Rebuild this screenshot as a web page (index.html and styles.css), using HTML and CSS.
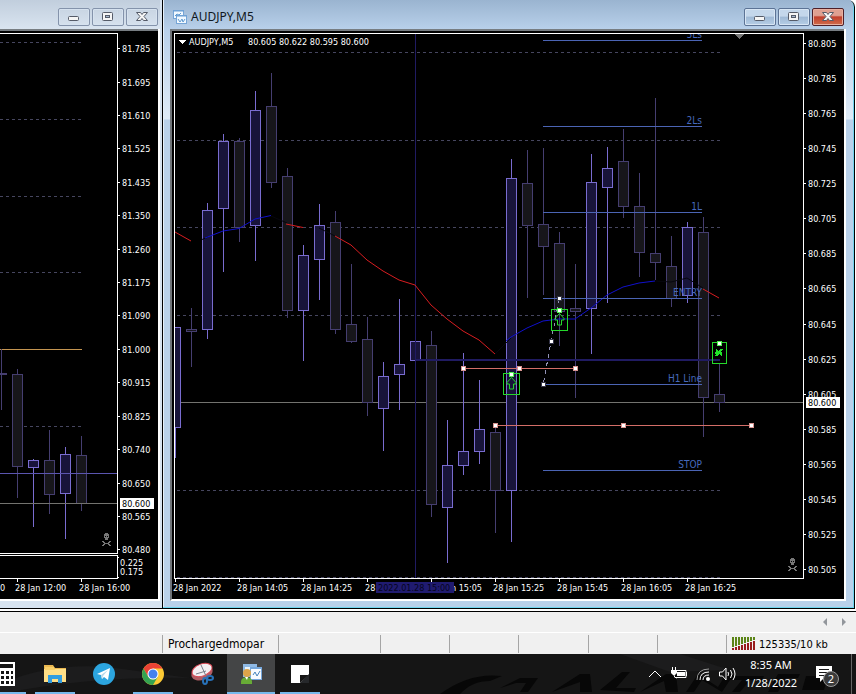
FILE: index.html
```html
<!DOCTYPE html>
<html lang="en">
<head>
<meta charset="utf-8">
<title>AUDJPY,M5</title>
<link rel="stylesheet" href="styles.css">
</head>
<body>
<main class="workspace">
  <section class="window window-idle" aria-label="Background chart">
    <header class="titlebar">
      <div class="controls">
        <button class="ctl" aria-label="Minimize"><svg viewBox="0 0 32 18"><rect class="glyph" x="10.500" y="8.500" width="10" height="4" rx="1"/></svg></button>
        <button class="ctl" aria-label="Restore"><svg viewBox="0 0 32 18"><rect class="glyph" x="10.500" y="4.500" width="10" height="8" rx="1"/><rect class="hole" x="13.500" y="7.500" width="4" height="2"/></svg></button>
        <button class="ctl" aria-label="Close"><svg viewBox="0 0 32 18"><path class="glyph" d="M10.500 4.500h4l1.500 2 1.500-2h4l-3.500 4 3.500 4h-4l-1.500-2-1.500 2h-4l3.500-4z"/></svg></button>
      </div>
    </header>
    <div class="pane">
      <svg class="chart" viewBox="0 31 158 568" role="img" aria-label="Price chart">
        <path class="grid" d="M0 42.500H82M0 119.500H82M0 196.500H82M0 272.500H82M0 426.500H82"/>
        <path class="orange" d="M0 349.500H82"/>
        <path class="bear" d="M1.500 349V410M17.500 369V498M49.500 430V514M81.500 436V511"/>
        <path class="bull" d="M33.500 459V527M65.500 447V539"/>
        <path class="bear" d="M-4.500 373.500h11v1h-11zM12.500 374.500h10v92h-10zM44.500 460.500h10v34h-10zM76.500 455.500h10v48h-10z"/>
        <path class="bull" d="M28.500 460.500h10v7h-10zM60.500 454.500h10v39h-10z"/>
        <path class="violet" d="M0 473.500H117"/>
        <path class="price" d="M0 503.500H117"/>
        <path class="frame" d="M0 33.500H117.500V553.500H0M0 555.500H117.500V578.500H0"/>
        <path class="frame" d="M118 48.500h2M118 82.500h2M118 115.500h2M118 148.500h2M118 182.500h2M118 215.500h2M118 249.500h2M118 282.500h2M118 315.500h2M118 349.500h2M118 382.500h2M118 416.500h2M118 449.500h2M118 483.500h2M118 516.500h2M118 549.500h2M118 557.500h1M118 577.500h1M17.500 578v4M81.500 578v4"/>
        <g class="skull"><path d="M105 533h3v1h1v4h-1v2h-3v-2h-1v-4h1zM102 541h2v1h1v1h3v-1h1v-1h2v1h-1v1h-1v1h1v1h1v1h-2v-1h-1v-1h-3v1h-1v1h-2v-1h1v-1h1v-1h-1v-1h-1z"/><path class="eyes" d="M105 536h1v1h-1zM107 536h1v1h-1z"/></g>
        <g class="label">
          <text x="122" y="52">81.785</text><text x="122" y="86">81.695</text><text x="122" y="119">81.610</text><text x="122" y="152">81.525</text><text x="122" y="186">81.435</text><text x="122" y="219">81.350</text><text x="122" y="253">81.260</text><text x="122" y="286">81.175</text><text x="122" y="319">81.090</text><text x="122" y="353">81.000</text><text x="122" y="386">80.915</text><text x="122" y="420">80.825</text><text x="122" y="453">80.740</text><text x="122" y="487">80.650</text><text x="122" y="520">80.565</text><text x="122" y="553">80.480</text>
          <text x="120" y="566">0.225</text><text x="120" y="575">0.175</text>
          <text x="0" y="591">0</text><text x="15" y="591">28 Jan 12:00</text><text x="79" y="591">28 Jan 16:00</text>
        </g>
        <rect class="tag" x="120" y="498" width="34" height="11"/><text class="tagtext" x="122" y="507">80.600</text>
      </svg>
    </div>
  </section>

  <section class="window window-active" aria-label="AUDJPY,M5 chart">
    <header class="titlebar">
      <svg class="doc" viewBox="0 0 14 14"><rect class="sheet" x=".5" y=".5" width="10" height="8"/><path class="sheetbar" d="M0 1h11"/><path class="trace" d="M2 6l2-2 2 1 2-2"/><rect class="sheet" x="3.500" y="5.500" width="10" height="8"/><path class="sheetbar" d="M3 6h11"/><path class="trace" d="M5 9l2 3 2-3 1 3 2-3"/></svg>
      <h1 class="caption">AUDJPY,M5</h1>
      <div class="controls">
        <button class="ctl" aria-label="Minimize"><svg viewBox="0 0 32 18"><rect class="glyph" x="10.500" y="8.500" width="10" height="4" rx="1"/></svg></button>
        <button class="ctl" aria-label="Restore"><svg viewBox="0 0 32 18"><rect class="glyph" x="10.500" y="4.500" width="10" height="8" rx="1"/><rect class="hole" x="13.500" y="7.500" width="4" height="2"/></svg></button>
        <button class="ctl ctl-close" aria-label="Close"><svg viewBox="0 0 32 18"><path class="glyph" d="M10.500 4.500h4l1.500 2 1.500-2h4l-3.500 4 3.500 4h-4l-1.500-2-1.500 2h-4l3.500-4z"/></svg></button>
      </div>
    </header>
    <div class="pane">
      <svg class="chart" viewBox="172 31 672 568" role="img" aria-label="AUDJPY five minute candles">
        <defs><clipPath id="plot"><rect x="175" y="34" width="628" height="544"/></clipPath></defs>
        <g clip-path="url(#plot)">
          <path class="grid" d="M177 52.500H720M177 140.500H720M177 227.500H720M177 315.500H720M177 490.500H720M177 577.500H720"/>
          <path class="price" d="M175 402.500H803"/>
          <path class="bear" d="M191.500 308V367M239.500 138V242M271.500 73V188M287.500 168V318M335.500 211V334M351.500 264V343M367.500 317V416M431.500 331V517M495.500 426V533M527.500 150V298M543.500 148V295M559.500 232V346M575.500 264V398M623.500 129V218M639.500 173V277M655.500 98V280M671.500 236V307M703.500 217V437M719.500 364V412"/>
          <path class="bull" d="M175.500 427V458M207.500 203V339M223.500 134V272M255.500 91V261M303.500 245V361M319.500 204V300M383.500 362V451M399.500 299V410M447.500 420V563M463.500 353V475M479.500 380V464M511.500 159V542M591.500 154V354M607.500 147V303M687.500 222V303"/>
          <path class="bear" d="M186.500 329.500h10v2h-10zM234.500 141.500h10v86h-10zM266.500 106.500h10v76h-10zM282.500 176.500h10v134h-10zM330.500 222.500h10v107h-10zM346.500 324.500h10v17h-10zM362.500 339.500h10v63h-10zM426.500 345.500h10v159h-10zM490.500 432.500h10v58h-10zM522.500 183.500h10v42h-10zM538.500 224.500h10v22h-10zM554.500 243.500h10v68h-10zM570.500 308.500h10v3h-10zM618.500 161.500h10v45h-10zM634.500 206.500h10v46h-10zM650.500 253.500h10v9h-10zM666.500 266.500h10v32h-10zM698.500 232.500h10v165h-10zM714.500 394.500h10v8h-10z"/>
          <path class="bull" d="M170.500 327.500h10v100h-10zM202.500 210.500h10v119h-10zM218.500 141.500h10v67h-10zM250.500 110.500h10v115h-10zM298.500 255.500h10v55h-10zM314.500 225.500h10v34h-10zM378.500 376.500h10v32h-10zM394.500 364.500h10v10h-10zM410.500 341.500h10v19h-10zM442.500 465.500h10v42h-10zM458.500 451.500h10v14h-10zM474.500 429.500h10v22h-10zM506.500 178.500h10v312h-10zM586.500 182.500h10v126h-10zM602.500 168.500h10v19h-10zM682.500 227.500h10v68h-10z"/>
          <path class="navy" d="M415.500 34V578"/>
          <path class="navy thick" d="M416 360H720"/>
          <path class="ma dark" d="M202 239.500L208 237M271 216L287 223M319 228L335 236M495 354L511 338M655 281L671 282L687 278L703 288"/>
          <path class="ma down" d="M175 232L191 241M286 224L303 227.500M335 236L351 245L367 260L383 271L399 280L415 285L431 305L447 319L463 331L479 340L495 354M703 289L719 298"/>
          <path class="ma up" d="M205 238L223 231L239 228.500L255 219L271 215.500M506 341L511 337L527 328L543 321L559 319L575 319L591 308L607 295L623 287L639 283L655 281"/>
          <path class="level" d="M543 40.500H702M543 126.500H702M543 212.500H702M543 298.500H702M543 384.500H702M543 470.500H702"/>
          <g class="leveltext"><text x="702" y="38">3Ls</text><text x="702" y="124">2Ls</text><text x="702" y="210">1L</text><text x="702" y="296">ENTRY</text><text x="702" y="382">H1 Line</text><text x="702" y="468">STOP</text></g>
          <path class="trade" d="M463 368.500H576M495 425.500H752"/>
          <path class="link" d="M559 299L543 385"/>
          <g class="dot"><rect x="557.500" y="296.500" width="4" height="4"/><rect x="549.500" y="339.500" width="4" height="4"/><rect x="541.500" y="382.500" width="4" height="4"/></g>
          <g class="handle"><rect x="461.500" y="366.500" width="4" height="4"/><rect x="517.500" y="366.500" width="4" height="4"/><rect x="573.500" y="366.500" width="4" height="4"/><rect x="493.500" y="423.500" width="4" height="4"/><rect x="621.500" y="423.500" width="4" height="4"/><rect x="749.500" y="423.500" width="4" height="4"/></g>
          <path class="marker" d="M503.500 373.500h16v21h-16zM551.500 309.500h16v21h-16zM712.500 342.500h14v21h-14z"/>
          <path class="arrow" d="M511.500 377.500l4.500 5v1.500h-2.500v5h-4v-5H507v-1.500zM559.500 313.500l4.500 5v1.500h-2.500v5h-4v-5H555v-1.500z"/>
          <path class="cross" d="M716 350l6 5M722 349l-6 7M715 353h7"/>
          <g class="greenhandle"><rect x="509.500" y="372.500" width="4" height="4"/><rect x="557.500" y="308.500" width="4" height="4"/><rect x="717.500" y="341.500" width="4" height="4"/></g>
          <path class="shift" d="M734 34h10l-5 5z"/>
          <g class="skull" transform="translate(686 25)"><path d="M105 533h3v1h1v4h-1v2h-3v-2h-1v-4h1zM102 541h2v1h1v1h3v-1h1v-1h2v1h-1v1h-1v1h1v1h1v1h-2v-1h-1v-1h-3v1h-1v1h-2v-1h1v-1h1v-1h-1v-1h-1z"/><path class="eyes" d="M105 536h1v1h-1zM107 536h1v1h-1z"/></g>
        </g>
        <path class="frame" d="M174.500 33.500H803.500V578.500H174.500z"/>
        <path class="frame" d="M804 43.500h2M804 78.500h2M804 113.500h2M804 148.500h2M804 183.500h2M804 218.500h2M804 253.500h2M804 288.500h2M804 324.500h2M804 359.500h2M804 394.500h2M804 429.500h2M804 464.500h2M804 499.500h2M804 534.500h2M804 569.500h2M175.500 578v4M239.500 578v4M303.500 578v4M367.500 578v4M431.500 578v4M495.500 578v4M559.500 578v4M623.500 578v4M687.500 578v4"/>
        <path class="caret" d="M178 40h8l-4 4z"/>
        <g class="label">
          <text x="189" y="45">AUDJPY,M5</text><text x="248" y="45">80.605 80.622 80.595 80.600</text>
          <text x="808" y="47">80.805</text><text x="808" y="82">80.785</text><text x="808" y="117">80.765</text><text x="808" y="152">80.745</text><text x="808" y="187">80.725</text><text x="808" y="222">80.705</text><text x="808" y="257">80.685</text><text x="808" y="292">80.665</text><text x="808" y="328">80.645</text><text x="808" y="363">80.625</text><text x="808" y="398">80.605</text><text x="808" y="433">80.585</text><text x="808" y="468">80.565</text><text x="808" y="503">80.545</text><text x="808" y="538">80.525</text><text x="808" y="573">80.505</text>
          <text x="173" y="591">28 Jan 2022</text><text x="237" y="591">28 Jan 14:05</text><text x="301" y="591">28 Jan 14:25</text><text x="365" y="591">28</text><text x="482" y="591" text-anchor="end">n 15:05</text><text x="493" y="591">28 Jan 15:25</text><text x="557" y="591">28 Jan 15:45</text><text x="621" y="591">28 Jan 16:05</text><text x="685" y="591">28 Jan 16:25</text>
        </g>
        <rect class="tag" x="806" y="397" width="34" height="11"/><text class="tagtext" x="808" y="406">80.600</text>
        <rect class="timetag" x="376" y="582" width="78" height="11"/><text class="timetext" x="378" y="591">2022.01.28 15:00</text>
      </svg>
    </div>
  </section>
</main>

<div class="tabstrip">
  <button class="step" aria-label="Previous tab"><svg viewBox="0 0 6 8"><path d="M5 0v8L1 4z"/></svg></button>
  <button class="step" aria-label="Next tab"><svg viewBox="0 0 6 8"><path d="M1 0v8l4-4z"/></svg></button>
</div>

<div class="statusbar">
  <span class="cell cell-help"></span>
  <span class="cell cell-profile">Prochargedmopar</span>
  <span class="cell cell-date"></span>
  <span class="cell"></span>
  <span class="cell"></span>
  <span class="cell"></span>
  <span class="cell"></span>
  <span class="cell"></span>
  <span class="cell cell-traffic">
    <svg class="signal" viewBox="0 0 24 14"><path class="sigdown" d="M1 0v10M4 0v9M7 0v8M10 0v7M13 0v6M16 0v5M19 0v4M22 0v3"/><path class="sigup" d="M1 11v2M4 10v3M7 9v4M10 8v5M13 7v6M16 6v7M19 5v8M22 4v9"/></svg>
    125335/10 kb
  </span>
</div>

<footer class="taskbar">
  <svg class="wallpaper" viewBox="0 0 856 40" preserveAspectRatio="none"><path class="streak" d="M0 30Q60 4 130 16L190 24Q90 22 0 40zM620 0h60l50 16-60 2z"/><path class="ink" d="M440 40q30-22 62-18l-12 5q-18 0-30 13zM500 34l20-10h18l-10 14h-8l6-9h-10zM552 38l28-18h10l2 18h-12v-10zM600 36l22-18h8l-14 16h20l-2 4zM640 38l26-18h10l2 18h-12l-2-11zM686 38l12-18 20 13 8-13h8l-12 18-20-12-8 12zM730 22h34l-2 4h-12l-10 12h-8l10-12h-14zM768 38l10-18h22l-2 4h-12l-8 14zM806 22h22l-4 14h-22z"/></svg>
  <nav class="apps" aria-label="Taskbar">
    <button class="app running" aria-label="Calculator"><svg viewBox="0 0 24 24"><path class="paper" d="M0 0h21v24H0z"/><path class="black" d="M2 2h17v4H2z"/><path class="keys" d="M2 10.500h17M2 15.500h17M2 20.500h17"/></svg></button>
    <button class="app running" aria-label="File Explorer"><svg viewBox="0 0 24 24"><path fill="#e9b750" d="M1 3h9l2 3h11v14H1z"/><path fill="#ffdf87" d="M1 7h22v13H1z"/><path fill="#f8cf69" d="M2 5h9l1 3H2z"/><path fill="#319de0" d="M5 13h14v8h-4v-4H9v4H5z"/></svg></button>
    <button class="app" aria-label="Telegram"><svg viewBox="0 0 24 24"><circle cx="12" cy="12" r="11" fill="#2ca5df"/><path fill="#fff" d="M5 12l13-6-2 12-4-3-2 2-1-4z"/><path fill="#b7d9ea" d="M9 13l7-5-5 6-1 3z"/></svg></button>
    <button class="app running" aria-label="Chrome"><svg viewBox="0 0 24 24"><circle cx="12" cy="12" r="11" fill="#fcc934"/><path fill="#e94235" d="M2.500 6.500A11 11 0 0 1 21.500 6.500H12L7.200 14.800z"/><path fill="#34a351" d="M2.500 6.500L7.200 14.800 12 17.500 16.800 14.800 12 23A11 11 0 0 1 2.500 6.500z"/><circle cx="12" cy="12" r="5.500" fill="#fff"/><circle cx="12" cy="12" r="4.500" fill="#4381ed"/></svg></button>
    <button class="app" aria-label="Snipping Tool"><svg viewBox="0 0 24 24"><ellipse cx="12" cy="11" rx="11" ry="7" transform="rotate(-20 12 11)" fill="#af5e65"/><ellipse cx="12" cy="8" rx="10.500" ry="6" transform="rotate(-20 12 8)" fill="#f3eff2" stroke="#d94552"/><path d="M6 12l10-3M11 3l5 11" stroke="#777f8b" fill="none"/><g fill="none" stroke="#2771b9" stroke-width="2"><ellipse cx="15" cy="19" rx="2" ry="3"/><ellipse cx="20" cy="16" rx="3" ry="2"/></g></svg></button>
    <button class="app active" aria-label="MetaTrader 4"><svg viewBox="0 0 24 24"><path fill="#8fb9e4" d="M4 2h14v13H4z"/><path fill="#e7f4ff" d="M6 5h11v9H6z"/><path fill="#76a7db" d="M11 5h12v13H11z"/><path fill="#f7fbff" d="M12 7h10v10H12z"/><path d="M14 13l2-3 2 4 3-5" fill="none" stroke="#4683bc"/><path fill="#68ab36" d="M2 22q-1-6 5-7 7 0 6 7z"/><circle cx="8" cy="11" r="4" fill="#dfa44a"/><path fill="#fff" d="M6 15l2 3 1-3z"/></svg></button>
    <button class="app running" aria-label="Sticky Notes"><svg viewBox="0 0 24 24"><path class="paper" d="M3 3h18v10l-8 8H3z"/><path class="black" d="M12 13h9l-9 8z"/><path fill="#26282b" d="M21 12v9h-9z"/></svg></button>
  </nav>
  <div class="tray">
    <button class="icon" aria-label="Show hidden icons"><svg viewBox="0 0 18 18"><path class="line" d="M3 12l6-6 6 6"/></svg></button>
    <button class="icon" aria-label="Battery"><svg viewBox="0 0 18 18"><path class="line" d="M6 5.500h10v7H6"/><path class="white" d="M7 7h8v4H7zM16 7h1v4h-1z"/><path class="white" d="M1 5h6v3L5 10H3L1 8z"/><path class="line" d="M2.500 2v3M5.500 2v3M4 10q0 3 3 3"/></svg></button>
    <button class="icon" aria-label="Wi-Fi"><svg viewBox="0 0 18 18"><path class="line dim" d="M3 15Q3 4 15 4"/><path class="line" d="M6 15Q6 7 15 7M9 15Q9 10 15 10"/><circle class="white" cx="14" cy="14" r="2"/></svg></button>
    <button class="icon" aria-label="Volume"><svg viewBox="0 0 18 18"><path class="line" d="M1.500 7h3L8 3v12l-3.500-4h-3zM10 7q1 2 0 4M12.500 5q3 4 0 8M15 3q4 6 0 12"/></svg></button>
    <time class="clock" datetime="2022-01-28T08:35">8:35 AM<br>1/28/2022</time>
    <button class="notices" aria-label="2 notifications"><svg viewBox="0 0 18 18"><path class="white" d="M1 1h16v12H9l-4 4v-4H1z"/><path class="rules" d="M4 4.500h10M4 7.500h10M4 10.500h6"/></svg><span class="badge">2</span></button>
    <span class="peek"></span>
  </div>
</footer>
</body>
</html>
```
FILE: styles.css
```css
* { box-sizing: border-box; }
body {
  margin: 0;
  min-height: 100vh;
  display: flex;
  flex-direction: column;
  background: #f0f0f0;
  color: #000;
  font-family: "DejaVu Sans Condensed", "DejaVu Sans", sans-serif;
  font-size: 11px;
  overflow-x: hidden;
}
button { margin: 0; padding: 0; border: 0; background: none; font: inherit; color: inherit; }
svg { display: block; }

.workspace {
  display: grid;
  grid-template-columns: 162px 1fr;
  padding-right: 1px;
  border-bottom: 1px solid #000;
  background: #fff;
  padding-bottom: 2px;
}
.window { display: flex; flex-direction: column; }
.window-idle {
  padding: 0 2px 7px 0;
  background: #d7e3f0;
  border-bottom: 1px solid #000;
}
.window-active {
  padding: 0 8px 7px 7px;
  border: 1px solid #000;
  border-top: 0;
  border-radius: 0 7px 0 0;
  background: linear-gradient(#9cb5d1 0, #b8d0ea 29px, #dfebf7 119px, #b9d1ea 120px);
  box-shadow: inset -1px -1px 0 #6fd5ee, inset 1px 0 0 #e6f0f9;
}
.titlebar { display: flex; height: 29px; padding-top: 8px; }
.window-idle .titlebar { background: linear-gradient(#c1cedd, #d9e4f0); }
.window-active .titlebar { background: linear-gradient(#9ab4d0, #b8d0ea); margin: 0 -5px; padding-left: 8px; padding-right: 5px; }
.controls { display: flex; gap: 2px; margin-left: auto; margin-right: 2px; }
.window-idle .controls { margin-right: 2px; }
.ctl {
  width: 32px;
  height: 18px;
  border: 1px solid #8493ab;
  border-radius: 2px;
  box-shadow: inset 0 0 0 1px #d6e2ef;
}
.ctl svg { width: 32px; height: 18px; margin: -1px; }
.window-active .ctl { border-color: #5c7395; background: linear-gradient(#c4d7eb 45%, #9fb9d5 50%, #b6cee6); box-shadow: inset 0 0 0 1px #d8e6f4; }
.window-active .ctl-close { border-color: #4e2029; background: linear-gradient(#dfa091 40%, #c23f2c 50%, #cf6d4c); box-shadow: inset 0 0 0 1px #e9b0a0; }
.glyph { fill: #f5f5f5; stroke: #555b68; }
.hole { fill: #a7b9d0; stroke: #555b68; }
.doc { width: 14px; height: 14px; margin: 2px 4px 0 0; }
.sheet { fill: #f2f9ff; stroke: #76a5d6; }
.sheetbar { stroke: #6a9fd4; stroke-width: 1; }
.trace { fill: none; stroke: #5f9ad0; }
.caption { margin: 0; font: 12px/18px "Noto Sans", "Open Sans", sans-serif; color: #101820; }

.pane { border: solid #fff; border-width: 0 2px 2px 0; background: #000; }
.window-active .pane { border-left: 2px solid #6f7479; }
.pane::before { content: ""; display: block; height: 2px; background: #777d82; }
.chart { width: 100%; height: auto; shape-rendering: crispEdges; }
.grid { stroke: #46465f; stroke-dasharray: 3 3; }
.price { stroke: #73736f; }
.violet { stroke: #5b55b0; }
.orange { stroke: #c49551; }
.bear { stroke: #453e70; fill: #17161b; }
.bull { stroke: #796cd0; fill: #18143a; }
.navy { stroke: #201b62; }
.thick { stroke-width: 2; }
.ma { fill: none; shape-rendering: auto; }
.down { stroke: #d81d20; }
.up { stroke: #1010cc; }
.dark { stroke: #06060e; }
.level { stroke: #4b64b4; }
.leveltext { fill: #4669bd; font-size: 10px; text-anchor: end; }
.trade { stroke: #d36e68; }
.link { stroke: #9191b5; stroke-dasharray: 4 4; }
.dot { fill: #fff; stroke: #343447; }
.handle { fill: #fff; stroke: #d99491; }
.marker, .arrow { fill: none; stroke: #25d82b; }
.arrow { shape-rendering: auto; }
.cross { stroke: #20e529; stroke-width: 2; }
.greenhandle { fill: #fff; stroke: #50f252; }
.shift { fill: #747474; }
.skull { fill: #777; }
.eyes { fill: #000; }
.frame { fill: none; stroke: #fff; }
.caret { fill: #fff; }
.label { fill: #fff; font-size: 9px; }
.tag { fill: #fff; }
.tagtext { fill: #000; font-size: 9px; }
.timetag { fill: #201b70; }
.timetext { fill: #05051d; font-size: 9px; }

.tabstrip {
  display: flex;
  align-items: center;
  justify-content: flex-end;
  gap: 13px;
  height: 20px;
  padding-right: 9px;
}
.step svg { width: 6px; height: 8px; fill: #92969b; }
.statusbar { display: flex; height: 22px; border-top: 1px solid #fff; white-space: nowrap; }
.cell { flex: 70 1 0; margin: 2px 0 1px; padding-left: 5px; border-left: 1px solid #a5a5a5; line-height: 19px; }
.cell-help { flex: 0 0 162px; border: 0; }
.cell-profile { flex: 0 0 116px; font-size: 12px; }
.cell-date { flex: 0 0 102px; }
.cell-traffic { flex: 0 0 130px; display: flex; align-items: center; gap: 3px; }
.signal { width: 24px; height: 14px; shape-rendering: crispEdges; }
.sigdown { stroke: #5b8517; stroke-width: 2; }
.sigup { stroke: #981b1c; stroke-width: 2; }

.taskbar {
  position: relative;
  display: flex;
  justify-content: space-between;
  height: 40px;
  margin-top: auto;
  background: #151515;
  color: #fff;
  overflow: hidden;
}
.wallpaper { position: absolute; inset: 0; width: 100%; height: 100%; }
.streak { fill: #1c1c1d; }
.ink { fill: #070707; }
.apps { position: relative; display: flex; gap: 1px; margin-left: -18px; }
.app { display: flex; align-items: center; justify-content: center; width: 48px; height: 40px; }
.app svg { width: 24px; height: 24px; }
.running { background: linear-gradient(#76b9ed, #76b9ed) center bottom / 40px 2px no-repeat; }
.active { background: #444546; border-bottom: 2px solid #76b9ed; padding-top: 2px; }
.paper, .white { fill: #fff; }
.black { fill: #161616; }
.keys { stroke: #161616; stroke-width: 3; stroke-dasharray: 3 2; }
.tray { position: relative; display: flex; align-items: center; }
.icon { margin-right: 6px; }
.icon svg { width: 18px; height: 18px; }
.line { fill: none; stroke: #fff; }
.dim { stroke: #999; }
.clock { width: 58px; font: 11px/18px "Noto Sans", "Open Sans", sans-serif; text-align: center; }
.notices { position: relative; margin: 0 18px 0 15px; }
.notices svg { width: 18px; height: 18px; }
.rules { stroke: #1a1a1a; }
.badge {
  position: absolute;
  left: 8px;
  top: 6px;
  width: 16px;
  height: 16px;
  border: 1px solid #999;
  border-radius: 50%;
  background: #3c3c3c;
  font: 11px/14px "Noto Sans", sans-serif;
  text-align: center;
}
.peek { width: 5px; height: 40px; border-left: 1px solid #666; }
```
